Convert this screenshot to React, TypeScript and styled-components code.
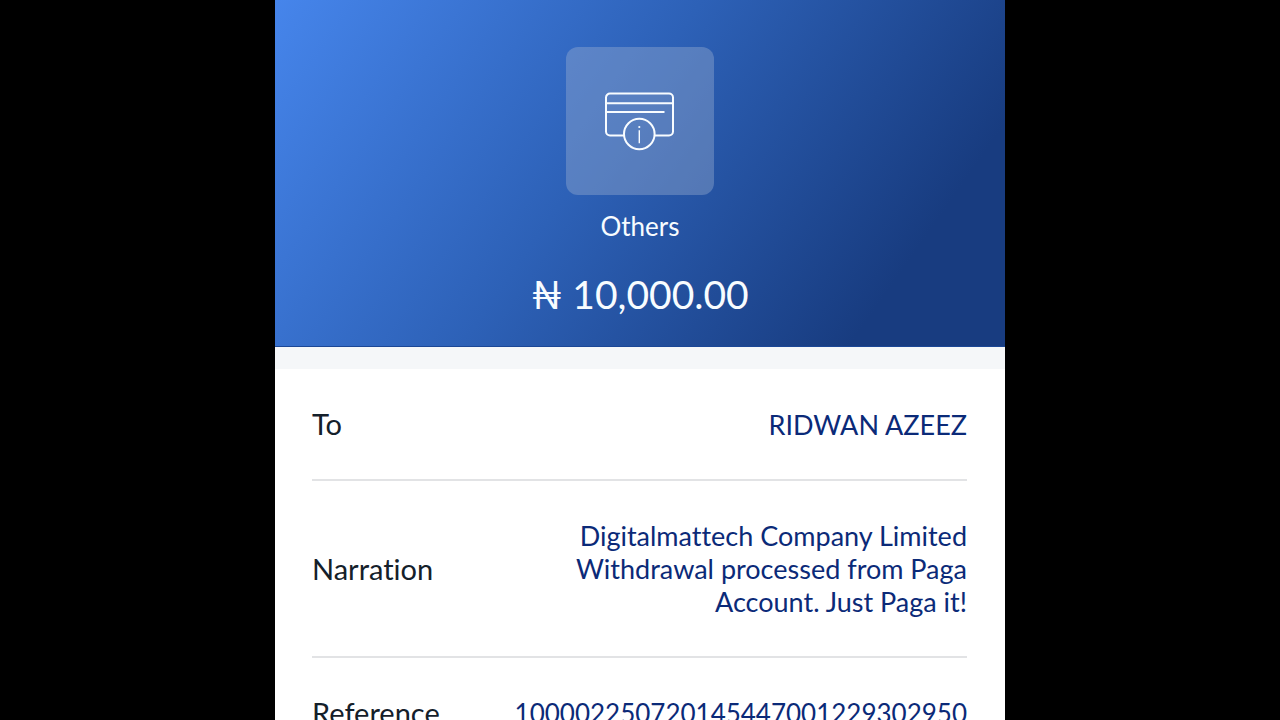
import React from "react";
import styled, { createGlobalStyle } from "styled-components";

const GlobalStyle = createGlobalStyle`
  * { box-sizing: border-box; }
  body {
    margin: 0;
    background: #000;
    font-family: Lato, "Liberation Sans", sans-serif;
    font-variant-ligatures: none;
  }
`;

const Page = styled.main`
  height: 100vh;
  overflow: hidden;
  background: #000;
`;

const Receipt = styled.article`
  max-width: 730px;
  min-height: 100%;
  margin: 0 auto;
  background: #fff;
`;

const Summary = styled.header`
  display: flex;
  flex-direction: column;
  align-items: center;
  padding: 47px 24px 28px;
  color: #f8fcff;
  background: linear-gradient(125deg, #4685eb 0%, #2d61b7 44%, #183c80 84%);
  border-bottom: 1px solid #1b4796;
`;

const CategoryTile = styled.div`
  display: flex;
  align-items: center;
  justify-content: center;
  width: 148px;
  height: 148px;
  border-radius: 12px;
  background: rgba(160, 180, 210, 0.38);
`;

const CategoryName = styled.p`
  margin: 15px 0 0;
  font-size: 26px;
  line-height: 32px;
`;

const Amount = styled.h1`
  margin: 28px 0 0;
  font-size: 39px;
  line-height: 48px;
  font-weight: 400;
`;

const Separator = styled.div`
  height: 22px;
  background: #f5f7f9;
`;

const Details = styled.dl`
  margin: 0;
  padding: 0 38px 0 37px;
`;

const Row = styled.div`
  display: flex;
  align-items: center;
  justify-content: space-between;
  padding: 38px 0;
  border-bottom: 2px solid #e2e3e5;
`;

const Label = styled.dt`
  font-size: 29px;
  line-height: 34px;
  color: #14202a;
`;

const Value = styled.dd<{ $numeric?: boolean }>`
  margin: 0;
  font-size: ${(p) => (p.$numeric ? 26 : 27)}px;
  line-height: 33px;
  color: #0b2a78;
  text-align: right;
`;

const Line = styled.span`
  display: block;
`;

const CardInfoIcon = () => (
  <svg width="72" height="60" viewBox="0 0 72 60" fill="none" stroke="#f8fcff" strokeWidth="2" aria-hidden="true">
    <path d="M20 44.500H6a4 4 0 0 1-4-4V6.600a4 4 0 0 1 4-4h59a4 4 0 0 1 4 4v33.900a4 4 0 0 1-4 4H50.500" />
    <path d="M2 12.300h67M2 21h58.500" />
    <circle cx="35.300" cy="43" r="15.300" />
    <path d="M35.300 39.300v13" strokeWidth="1.400" />
    <circle cx="35.300" cy="36" r="1.100" fill="#f8fcff" stroke="none" />
  </svg>
);

const rows = [
  { label: "To", lines: ["RIDWAN AZEEZ"] },
  {
    label: "Narration",
    lines: [
      "Digitalmattech Company Limited",
      "Withdrawal processed from Paga",
      "Account. Just Paga it!",
    ],
  },
  { label: "Reference", lines: ["100002250720145447001229302950"], numeric: true },
];

export default function App() {
  return (
    <Page>
      <GlobalStyle />
      <Receipt>
        <Summary>
          <CategoryTile>
            <CardInfoIcon />
          </CategoryTile>
          <CategoryName>Others</CategoryName>
          <Amount>₦ 10,000.00</Amount>
        </Summary>
        <Separator />
        <Details>
          {rows.map((row) => (
            <Row key={row.label}>
              <Label>{row.label}</Label>
              <Value $numeric={row.numeric}>
                {row.lines.map((line) => (
                  <Line key={line}>{line}</Line>
                ))}
              </Value>
            </Row>
          ))}
        </Details>
      </Receipt>
    </Page>
  );
}
